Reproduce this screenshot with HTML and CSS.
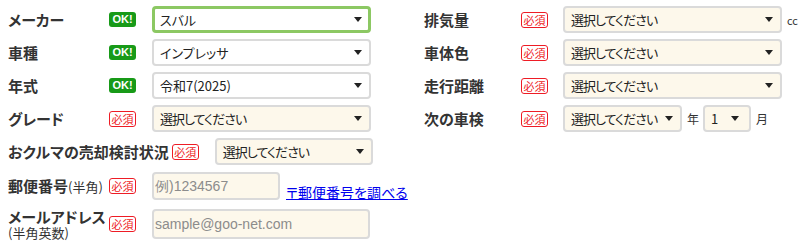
FILE: index.html
```html
<!DOCTYPE html>
<html lang="ja">
<head>
    <meta charset="UTF-8">
    <meta name="viewport" content="width=device-width, initial-scale=1.0">
    <title>車両情報入力</title>
    <link rel="stylesheet" href="styles.css">
</head>
<body>

    <!-- Car info (two columns) -->
    <div class="cols">
        <div class="col col-left">
            <div class="row">
                <span class="label">メーカー</span>
                <span class="badge ok">OK!</span>
                <div class="select active">スバル</div>
            </div>
            <div class="row">
                <span class="label">車種</span>
                <span class="badge ok">OK!</span>
                <div class="select done">インプレッサ</div>
            </div>
            <div class="row">
                <span class="label">年式</span>
                <span class="badge ok">OK!</span>
                <div class="select done">令和7(2025)</div>
            </div>
            <div class="row">
                <span class="label">グレード</span>
                <span class="badge req">必須</span>
                <div class="select">選択してください</div>
            </div>
        </div>

        <div class="col col-right">
            <div class="row">
                <span class="label">排気量</span>
                <span class="badge req">必須</span>
                <div class="select">選択してください</div>
                <span class="unit cc">cc</span>
            </div>
            <div class="row">
                <span class="label">車体色</span>
                <span class="badge req">必須</span>
                <div class="select">選択してください</div>
            </div>
            <div class="row">
                <span class="label">走行距離</span>
                <span class="badge req">必須</span>
                <div class="select">選択してください</div>
            </div>
            <div class="row">
                <span class="label">次の車検</span>
                <span class="badge req">必須</span>
                <div class="select narrow">選択してください</div>
                <span class="unit">年</span>
                <div class="select tiny">1</div>
                <span class="unit">月</span>
            </div>
        </div>
    </div>

    <!-- Sale status -->
    <div class="row">
        <span class="label label-auto">おクルマの売却検討状況</span>
        <span class="badge req">必須</span>
        <div class="select medium">選択してください</div>
    </div>

    <!-- Postal code -->
    <div class="row row-zip">
        <span class="label">郵便番号<small>(半角)</small></span>
        <span class="badge req">必須</span>
        <input type="text" class="text-field zip" placeholder="例)1234567">
        <a href="#" class="zip-link">〒郵便番号を調べる</a>
    </div>

    <!-- Mail -->
    <div class="row row-mail">
        <span class="label label-stack">メールアドレス<small>(半角英数)</small></span>
        <span class="badge req">必須</span>
        <input type="text" class="text-field mail" placeholder="sample@goo-net.com">
    </div>

</body>
</html>
```

FILE: styles.css
```css
/* Base */
body {
    margin: 0;
    padding: 6px 0 0 8px;
    background-color: #fff;
    color: #333;
    font-family: "Noto Sans CJK JP", "Noto Sans", sans-serif;
    font-feature-settings: "palt";
}

/* Two column block */
.cols {
    display: flex;
}

.col-left {
    width: 416px;
}

.row {
    display: flex;
    align-items: center;
    height: 27px;
    margin-bottom: 6px;
}

/* Labels */
.label {
    width: 101px;
    font-size: 15px;
    font-weight: bold;
    color: #333;
    line-height: 1.2;
    white-space: nowrap;
}

.col-right .label {
    width: 97px;
}

.label small {
    font-size: 13px;
    font-weight: normal;
}

.label-auto {
    width: auto;
    margin-right: 3px;
}

.label-stack {
    line-height: 17px;
}

.label-stack small {
    display: block;
    line-height: 15px;
}

/* Badges */
.badge {
    box-sizing: border-box;
    width: 27px;
    height: 16px;
    margin-right: 16px;
    border-radius: 3px;
    font-size: 11px;
    line-height: 14px;
    text-align: center;
    flex-shrink: 0;
}

.col-right .badge {
    margin-right: 15px;
}

.badge.ok {
    height: 15px;
    background-color: #189a18;
    color: #fff;
    font-family: "Liberation Sans", Arial, sans-serif;
    font-weight: bold;
    line-height: 15px;
}

.badge.req {
    border: 1px solid #ee1c25;
    background-color: #fff;
    color: #ee1c25;
}

/* Custom select boxes */
.select {
    position: relative;
    box-sizing: border-box;
    display: flex;
    align-items: center;
    width: 219px;
    height: 27px;
    padding: 0 6px;
    border: 2px solid #dadada;
    border-radius: 4px;
    background-color: #fdf8eb;
    color: #222;
    font-size: 13px;
    letter-spacing: -1px;
    white-space: nowrap;
    cursor: pointer;
}

.select::after {
    content: "";
    position: absolute;
    right: 7px;
    top: 9px;
    border-left: 4px solid transparent;
    border-right: 4px solid transparent;
    border-top: 5px solid #222;
}

.select.done {
    background-color: #fff;
    letter-spacing: 0;
}

.select.active {
    border: 3px solid #8cc863;
    background-color: #fff;
    padding-left: 5px;
    letter-spacing: 0;
}

.select.active::after {
    right: 6px;
    top: 8px;
}

.select.narrow {
    width: 119px;
}

.select.tiny {
    width: 48px;
}

.select.tiny::after {
    right: 10px;
}

.select.medium {
    width: 158px;
}

.unit {
    margin: 0 4px 0 5px;
    font-size: 12px;
    color: #333;
}

.unit.cc {
    font-size: 11px;
}

/* Text inputs */
.text-field {
    box-sizing: border-box;
    margin: 0;
    padding: 0 1px;
    border: 2px solid #dadada;
    border-radius: 4px;
    background-color: #fdf8eb;
    color: #222;
    font-family: "Liberation Sans", Arial, sans-serif;
    font-size: 14px;
    outline: none;
}

.text-field::placeholder {
    color: #8c8c8c;
}

.text-field.zip {
    width: 128px;
    height: 28px;
}

.text-field.mail {
    width: 218px;
    height: 30px;
}

.row-zip {
    height: 28px;
    margin-top: 7px;
    margin-bottom: 9px;
}

.zip-link {
    align-self: flex-end;
    margin-left: 6px;
    margin-bottom: -2px;
    font-size: 14px;
    color: #0000ee;
    text-decoration: underline;
}

.row-mail {
    height: 30px;
}
```
